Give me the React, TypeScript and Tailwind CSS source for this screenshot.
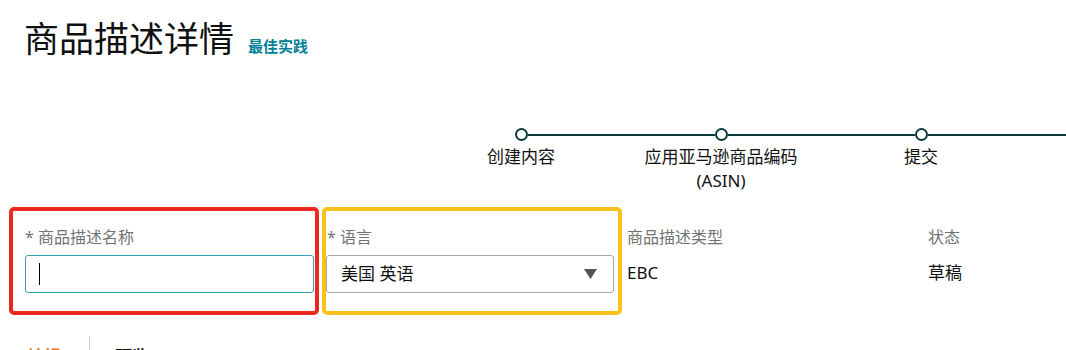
import React from 'react';

const steps = [
  { label: '创建内容' },
  { label: '应用亚马逊商品编码', sub: '(ASIN)' },
  { label: '提交' },
  { label: '' },
];

function Stepper() {
  return (
    <div className="flex pl-[421px] mt-[68px] w-max">
      {steps.map((s, i) => (
        <div key={i} className="w-[200px] flex flex-col items-center">
          <div className="flex items-center w-full">
            <div className={`flex-1 h-[2px] ${i === 0 ? 'bg-transparent' : 'bg-[#0c3a3b]'}`} />
            <div className="w-[13px] h-[13px] rounded-full border-2 border-[#0c3a3b] bg-white shrink-0" />
            <div className={`flex-1 h-[2px] ${i === steps.length - 1 ? 'bg-transparent' : 'bg-[#0c3a3b]'}`} />
          </div>
          <div className="mt-[4px] text-[17px] leading-[24px] text-[#0f1111] text-center">
            {s.label}
            {s.sub && (
              <>
                <br />
                {s.sub}
              </>
            )}
          </div>
        </div>
      ))}
    </div>
  );
}

export default function App() {
  return (
    <div
      className="w-[1066px] h-[350px] overflow-hidden bg-white"
      style={{ fontFamily: '"Noto Sans", "Noto Sans CJK SC", sans-serif' }}
    >
      <div className="flex items-baseline gap-[14px] pt-[18px] pl-[24px]">
        <h1 className="text-[35px] leading-[42px] font-normal text-[#0f1111]">商品描述详情</h1>
        <a className="text-[15px] font-bold text-[#008296]">最佳实践</a>
      </div>

      <Stepper />

      <div className="flex items-start pl-[9px] mt-[14px]">
        <div className="w-[310px] h-[108px] border-4 border-[#ea2a1e] rounded-[5px] pt-[15px] pl-[12px]">
          <div className="text-[16px] leading-[22px] text-[#6f7373]">* 商品描述名称</div>
          <div className="mt-[7px] w-[289px] h-[38px] border border-[#2fa3b3] rounded-[3px] flex items-center pl-[13px]">
            <span className="w-[1px] h-[22px] bg-black" />
          </div>
        </div>

        <div className="ml-[3px] w-[300px] h-[108px] border-4 border-[#f7c11e] rounded-[5px] pt-[15px]">
          <div className="pl-[1px] text-[16px] leading-[22px] text-[#6f7373]">* 语言</div>
          <div className="mt-[7px] w-[288px] h-[38px] border border-[#a6a6a6] rounded-[3px] flex items-center justify-between pl-[14px] pr-[16px]">
            <span className="text-[17px] text-[#0f1111]">美国 英语</span>
            <svg width="13" height="10" viewBox="0 0 13 10">
              <polygon points="0,0 13,0 6.5,10" fill="#555" />
            </svg>
          </div>
        </div>

        <div className="ml-[5px] w-[301px] pt-[19px]">
          <div className="text-[16px] leading-[22px] text-[#6f7373]">商品描述类型</div>
          <div className="mt-[13px] text-[17px] leading-[24px] text-[#0f1111]">EBC</div>
        </div>

        <div className="pt-[19px]">
          <div className="text-[16px] leading-[22px] text-[#6f7373]">状态</div>
          <div className="mt-[13px] text-[17px] leading-[24px] text-[#0f1111]">草稿</div>
        </div>
      </div>

      <div className="flex items-start mt-[21px]">
        <div className="w-[89px] pl-[27px] pt-[8px] text-[17px] font-bold text-[#e3760f]">编辑</div>
        <div className="w-[1px] h-[30px] bg-[#ccc]" />
        <div className="pl-[25px] pt-[8px] text-[17px] font-bold text-[#0f1111]">预览</div>
      </div>
    </div>
  );
}
